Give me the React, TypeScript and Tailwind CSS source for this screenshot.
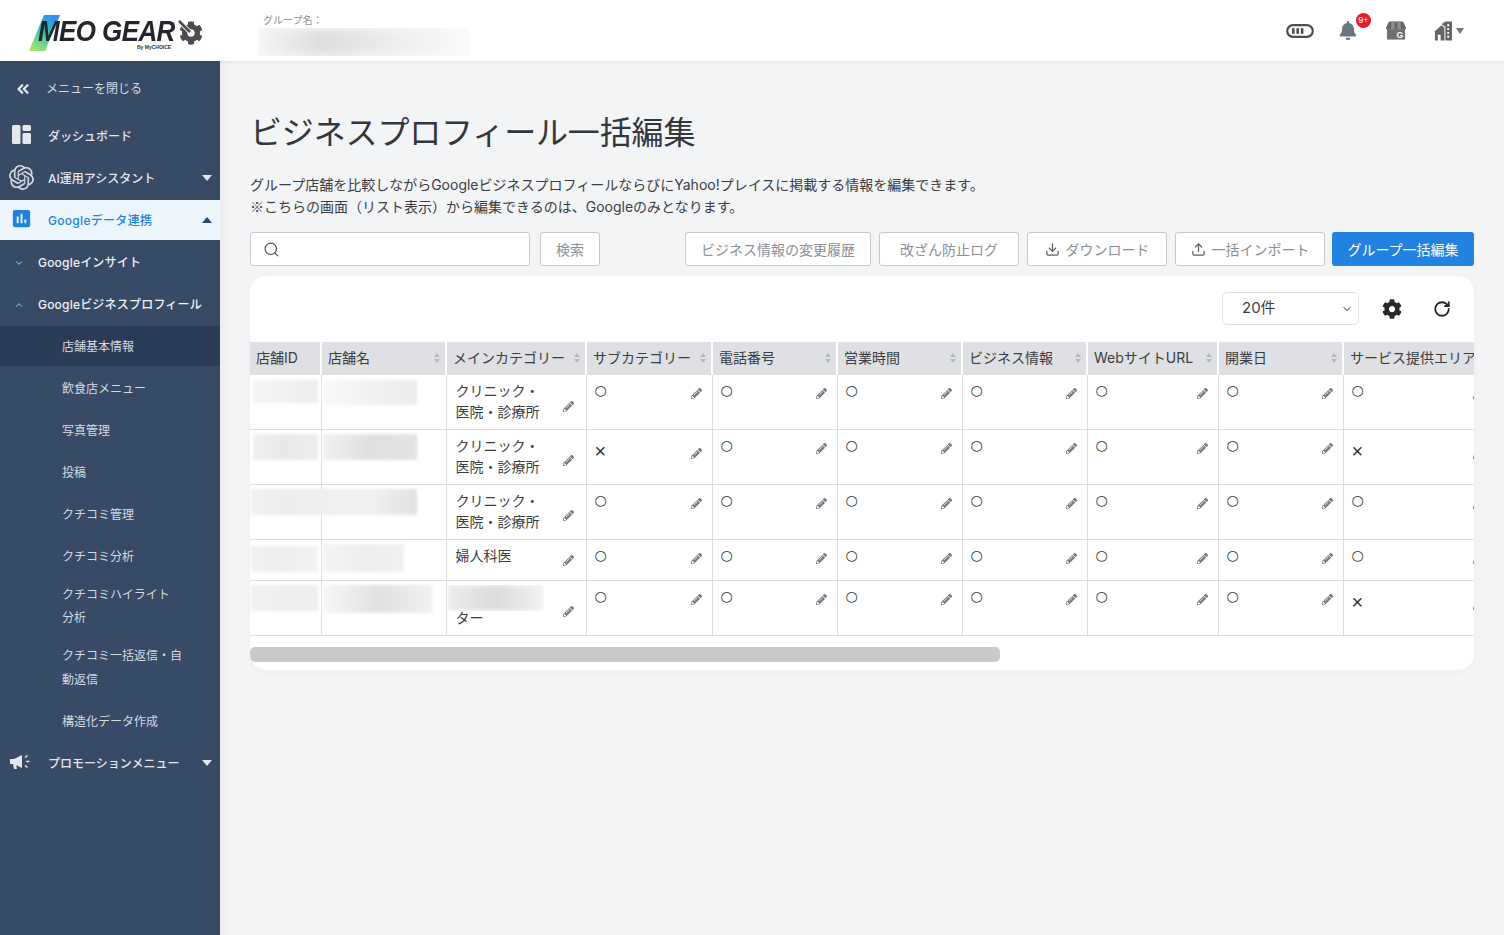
import React from "react";
import { ChevronsLeft, ChevronDown, ChevronUp, Search, Download, Upload, RotateCw } from "lucide-react";
import { FaBell, FaCog, FaPencilAlt } from "react-icons/fa";
import { MdInsertChart } from "react-icons/md";
import { SiOpenai } from "react-icons/si";

const Caret = ({ up, w = 10 }: { up?: boolean; w?: number }) => (
  <svg width={w} height="6" viewBox="0 0 10 6" preserveAspectRatio="none" className="shrink-0">
    <path d={up ? "M0 6 L5 0 L10 6 Z" : "M0 0 L10 0 L5 6 Z"} fill="currentColor" />
  </svg>
);

const Sort = () => (
  <svg width="6" height="10" viewBox="0 0 6 10" className="shrink-0">
    <path d="M3 0 L6 4 L0 4 Z M3 10 L0 6 L6 6 Z" fill="#b5b8bd" />
  </svg>
);

const Pencil = ({ main }: { main?: boolean }) => (
  <FaPencilAlt size={11} className={"shrink-0 text-[#767c85] " + (main ? "mt-[10px]" : "mt-[6px]")} />
);

function Logo() {
  return (
    <div className="relative w-[220px] h-[60px] shrink-0">
      <svg width="32" height="37" viewBox="0 0 32 37" className="absolute left-[29px] top-[14px]">
        <defs>
          <linearGradient id="lg" x1="0.7" y1="0" x2="0.2" y2="1">
            <stop offset="0" stopColor="#2f8ff0" />
            <stop offset="0.45" stopColor="#38c0b0" />
            <stop offset="1" stopColor="#a5e66a" />
          </linearGradient>
        </defs>
        <path d="M15 0 H31 L16 36 H0 Z" fill="url(#lg)" />
      </svg>
      <span className="absolute left-[38px] top-[19px] text-[26px] leading-[22px] italic font-bold tracking-[-0.6px] text-[#23262b] whitespace-nowrap origin-left scale-y-110 [font-family:'Liberation_Sans',sans-serif]">
        MEO GEAR
      </span>
      <span className="absolute left-[137px] top-[43px] text-[5px] leading-[6px] font-bold text-[#333] whitespace-nowrap [font-family:'Liberation_Sans',sans-serif]">
        By MyCHOICE
      </span>
      <FaCog size={24} className="absolute left-[179px] top-[20px] text-[#4a4d52]" />
      <svg width="18" height="18" viewBox="0 0 18 18" className="absolute left-[176px] top-[17px]">
        <path d="M3 3 L14 14" stroke="#fff" strokeWidth="4.5" />
        <path d="M3 3 L14 14" stroke="#4a4d52" strokeWidth="2.6" />
      </svg>
    </div>
  );
}

function Header() {
  return (
    <header className="relative z-20 h-[61px] shrink-0 bg-white flex items-center shadow-[0_1px_4px_rgba(0,0,0,0.08)]">
      <Logo />
      <div className="ml-[38px] w-[211px] pt-[14px] self-start">
        <div className="pl-[5px] text-[10px] leading-[13px] text-[#8d9096]">グループ名：</div>
        <div className="mt-[1px] h-[28px] overflow-hidden bg-[#fbfbfb]">
          <div className="h-full blur-[4px] bg-linear-to-r from-[#f4f4f4] via-[#dfdfdf] via-30% to-[#fbfbfb]" />
        </div>
      </div>
      <div className="ml-auto flex items-center pr-[40px]">
        <svg width="28" height="14" viewBox="0 0 28 14" className="mr-[25px]">
          <rect x="1.2" y="1.2" width="25.6" height="11.6" rx="5.8" fill="none" stroke="#4a4d52" strokeWidth="2.2" />
          <rect x="6" y="4.2" width="2.6" height="5.6" fill="#4a4d52" />
          <rect x="10.4" y="4.2" width="2.6" height="5.6" fill="#4a4d52" />
          <rect x="14.8" y="4.2" width="2.6" height="5.6" fill="#4a4d52" />
        </svg>
        <div className="relative mr-[29px] w-[18px] h-[20px] flex items-center justify-center">
          <FaBell size={19} className="text-[#6b7480]" />
          <span className="absolute left-[17px] top-[-8px] w-[15px] h-[15px] rounded-full bg-[#e8192c] text-white text-[9px] leading-[15px] text-center [font-family:'Liberation_Sans',sans-serif]">
            9+
          </span>
        </div>
        <svg width="20" height="19" viewBox="0 0 21 19" className="mr-[28px]">
          <path d="M3 0 H18 L21 7 V8 H0 V7 Z" fill="#666" />
          <path d="M6 0 H9 V8 H5 Z M12 0 H15 L16 8 H12 Z" fill="#8e8e8e" />
          <path d="M1 8 H20 V19 H1 Z" fill="#6f6f6f" />
          <text x="11" y="17.5" fontSize="9" fontWeight="700" fill="#fff" fontFamily="Liberation Sans">G</text>
        </svg>
        <svg width="18" height="20" viewBox="0 0 19 20">
          <path d="M0 11 L8 4 L11 6.5 V20 H7 V14 H4 V20 H1 V11 Z" fill="#666" />
          <path d="M8 3 L12 0 H19 V20 H12 V5.5 Z" fill="#666" />
          <path d="M14 3 h2 v2 h-2 z M14 7 h2 v2 h-2 z M14 11 h2 v2 h-2 z M14 15 h2 v2 h-2 z" fill="#fff" />
        </svg>
        <span className="ml-[4px] text-[#777]"><Caret w={8} /></span>
      </div>
    </header>
  );
}

function TopItem({ icon, label, caret, active }: { icon: React.ReactNode; label: string; caret?: "up" | "down"; active?: boolean }) {
  return (
    <div className={"flex items-center pr-[8px] text-[12px] font-medium " + (active ? "h-[40px] pt-[1px] mb-[2px] bg-[#edf5fc] text-[#1e82e0] tracking-[0.3px]" : "h-[42px] text-[#e4e8ee]")}>
      <div className="w-[42px] flex justify-center shrink-0">{icon}</div>
      <span className="ml-[6px]">{label}</span>
      {caret && <span className={"ml-auto -mt-[2px] " + (active ? "text-[#2b4a6f]" : "text-[#e4e8ee]")}><Caret up={caret === "up"} /></span>}
    </div>
  );
}

function GroupItem({ label, open }: { label: string; open?: boolean }) {
  return (
    <div className="h-[42px] flex items-center text-[12px] font-medium tracking-[0.2px] text-[#f0f2f5]">
      <div className="w-[38px] pl-[14px] shrink-0 text-[#aab2bf]">
        {open ? <ChevronUp size={10} strokeWidth={2.5} /> : <ChevronDown size={10} strokeWidth={2.5} />}
      </div>
      <span>{label}</span>
    </div>
  );
}

function SubItem({ label, cls = "h-[42px]" }: { label: React.ReactNode; cls?: string }) {
  return (
    <div className={"flex items-center pl-[62px] text-[12px] leading-[23.5px] whitespace-nowrap text-[#d5dae2] " + cls}>
      <span>{label}</span>
    </div>
  );
}

function Sidebar() {
  return (
    <aside className="w-[220px] shrink-0 bg-[#374a66] flex flex-col">
      <div className="h-[55px] flex items-center text-[12px] text-[#d5dae2]">
        <div className="w-[46px] pl-[14px] shrink-0 text-[#e4e8ee]"><ChevronsLeft size={18} strokeWidth={3} /></div>
        <span>メニューを閉じる</span>
      </div>
      <TopItem
        label="ダッシュボード"
        icon={
          <svg width="19" height="19" viewBox="0 0 19 19" className="-mt-[6px]">
            <rect x="0" y="0" width="8.5" height="19" rx="1.5" fill="#e4e8ee" />
            <rect x="10.5" y="0" width="8.5" height="6" rx="1.5" fill="#e4e8ee" />
            <rect x="10.5" y="8" width="8.5" height="11" rx="1.5" fill="#e4e8ee" />
          </svg>
        }
      />
      <TopItem label="AI運用アシスタント" caret="down" icon={<SiOpenai size={25} className="text-[#d5dae2] -mt-[3px]" />} />
      <TopItem label="Googleデータ連携" caret="up" active icon={<MdInsertChart size={23} className="text-[#1e82e0] -mt-[5px]" />} />
      <GroupItem label="Googleインサイト" />
      <GroupItem label="Googleビジネスプロフィール" open />
      <SubItem label="店舗基本情報" cls="h-[40px] pt-[1px] mb-[2px] bg-[#2b3a55]" />
      <SubItem label="飲食店メニュー" />
      <SubItem label="写真管理" />
      <SubItem label="投稿" />
      <SubItem label="クチコミ管理" />
      <SubItem label="クチコミ分析" />
      <SubItem label={<>クチコミハイライト<br />分析</>} cls="h-[56px]" />
      <SubItem label={<>クチコミ一括返信・自<br />動返信</>} cls="h-[67px]" />
      <SubItem label="構造化データ作成" />
      <TopItem
        label="プロモーションメニュー"
        caret="down"
        icon={
          <svg width="22" height="16" viewBox="0 0 22 16" className="-mt-[4px]">
            <path d="M0 5 H4 L12 1 V14 L4 10 H0 Z M3 10 H6 L7 15 H4 Z" fill="#e4e8ee" />
            <path d="M15 3.5 L17.5 1.5 M16 7.5 H19.5 M15 11.5 L17.5 13.5" stroke="#e4e8ee" strokeWidth="1.6" />
          </svg>
        }
      />
    </aside>
  );
}

const Btn = ({ children, cls }: { children: React.ReactNode; cls: string }) => (
  <div className={"h-[34px] flex items-center justify-center gap-[6px] border border-[#c6c8cd] rounded-[3px] bg-white text-[14px] text-[#8b8f96] whitespace-nowrap " + cls}>
    {children}
  </div>
);

const columns = [
  { w: "w-[71px]", label: "店舗ID", sort: false },
  { w: "w-[125px]", label: "店舗名", sort: true },
  { w: "w-[140px]", label: "メインカテゴリー", sort: true },
  { w: "w-[126px]", label: "サブカテゴリー", sort: true },
  { w: "w-[125px]", label: "電話番号", sort: true },
  { w: "w-[125px]", label: "営業時間", sort: true },
  { w: "w-[125px]", label: "ビジネス情報", sort: true },
  { w: "w-[131px]", label: "WebサイトURL", sort: true },
  { w: "w-[125px]", label: "開業日", sort: true },
  { w: "w-[151px]", label: "サービス提供エリア", sort: false },
];

type Row = {
  h: string;
  id: string;
  name: string;
  main: React.ReactNode;
  flags: string[];
};

const two = (
  <>
    クリニック・
    <br />
    医院・診療所
  </>
);

const rows: Row[] = [
  {
    h: "h-[54px]",
    id: "ml-[3px] mt-[5px] w-[65px] h-[23px] bg-linear-to-r from-[#f5f5f5] via-[#f1f1f1] to-[#ececec]",
    name: "ml-[1px] mt-[5px] w-[94px] h-[25px] bg-linear-to-r from-[#fafafa] via-[#f1f1f1] to-[#ebebeb]",
    main: two,
    flags: ["○", "○", "○", "○", "○", "○", "○"],
  },
  {
    h: "h-[55px]",
    id: "ml-[3px] mt-[4px] w-[65px] h-[26px] bg-linear-to-r from-[#efefef] via-[#e8e8e8] to-[#ececec]",
    name: "ml-[1px] mt-[4px] w-[94px] h-[26px] bg-linear-to-r from-[#f0f0f0] via-[#e0e0e0] to-[#e3e3e3]",
    main: two,
    flags: ["×", "○", "○", "○", "○", "○", "×"],
  },
  {
    h: "h-[55px]",
    id: "relative z-10 ml-[1px] mt-[4px] w-[72px] h-[26px] bg-linear-to-r from-[#f0f0f0] via-[#ececec] to-[#eeeeee]",
    name: "mt-[4px] w-[95px] h-[26px] bg-linear-to-r from-[#eeeeee] via-[#f0f0f0] to-[#e2e2e2]",
    main: two,
    flags: ["○", "○", "○", "○", "○", "○", "○"],
  },
  {
    h: "h-[41px]",
    id: "ml-[1px] mt-[6px] w-[67px] h-[26px] bg-linear-to-r from-[#f0f0f0] via-[#ededed] to-[#f2f2f2]",
    name: "ml-[1px] mt-[4px] w-[81px] h-[28px] bg-linear-to-r from-[#f4f4f4] via-[#ededed] to-[#efefef]",
    main: "婦人科医",
    flags: ["○", "○", "○", "○", "○", "○", "○"],
  },
  {
    h: "h-[55px]",
    id: "ml-[1px] mt-[4px] w-[67px] h-[26px] bg-linear-to-r from-[#f0f0f0] via-[#eeeeee] to-[#eeeeee]",
    name: "ml-[1px] mt-[4px] w-[109px] h-[28px] bg-linear-to-r from-[#f6f6f6] via-[#e2e2e2] to-[#f0f0f0]",
    main: (
      <>
        <div className="-ml-[8px] -mt-[1px] -mb-[4px] w-[96px] h-[26px] overflow-hidden">
          <div className="h-full blur-[2px] bg-linear-to-r from-[#ececec] via-[#dcdcdc] to-[#f2f2f2]" />
        </div>
        ター
      </>
    ),
    flags: ["○", "○", "○", "○", "○", "○", "×"],
  },
];

const Blur = ({ cls }: { cls: string }) => <div className={"blur-[1.5px] " + cls} />;

const Flag = ({ v }: { v: string }) => (
  <div className="pl-[8px] pr-[10px] pt-[5px] flex items-center justify-between">
    {v === "×" ? (
      <span className="leading-[32px] text-[20px] text-[#333] [font-family:'Liberation_Sans',sans-serif]">×</span>
    ) : (
      <span className="leading-[21px] text-[14px] text-[#333] [font-family:'DejaVu_Sans',sans-serif]">○</span>
    )}
    <Pencil />
  </div>
);

function DataTable() {
  return (
    <div className="overflow-hidden">
      <table className="table-fixed border-collapse w-[1244px] text-[14px] text-[#3a3d42]">
        <colgroup>
          {columns.map((c) => (
            <col key={c.label} className={c.w} />
          ))}
        </colgroup>
        <thead>
          <tr className="h-[33px] bg-[#dfe0e3]">
            {columns.map((c) => (
              <th key={c.label} className="p-0 font-normal text-left border-r-2 border-r-white last:border-r-0">
                <div className="flex items-center justify-between pl-[6px] pr-[5px] -mt-[2px] whitespace-nowrap">
                  <span>{c.label}</span>
                  {c.sort && <Sort />}
                </div>
              </th>
            ))}
          </tr>
        </thead>
        <tbody>
          {rows.map((r, i) => (
            <tr key={i} className={r.h + " border-b border-b-[#dcdde0]"}>
              <td className="p-0 align-top border-r border-r-[#dcdde0]"><Blur cls={r.id} /></td>
              <td className="p-0 align-top border-r border-r-[#dcdde0]"><Blur cls={r.name} /></td>
              <td className="p-0 align-top border-r border-r-[#dcdde0]">
                <div className="pl-[9px] pr-[12px] pt-[5px] flex items-center justify-between leading-[21px]">
                  <div>{r.main}</div>
                  <Pencil main />
                </div>
              </td>
              {r.flags.map((v, j) => (
                <td key={j} className={"p-0 align-top " + (j < 6 ? "border-r border-r-[#dcdde0]" : "")}>
                  <Flag v={v} />
                </td>
              ))}
            </tr>
          ))}
        </tbody>
      </table>
    </div>
  );
}

export default function App() {
  return (
    <div className="h-screen flex flex-col overflow-hidden bg-[#f3f4f6] text-[#3a3d42] [font-family:Inter,'Noto_Sans_CJK_JP',sans-serif]">
      <Header />
      <div className="flex flex-1 min-h-0">
        <Sidebar />
        <main className="flex-1 min-w-0 px-[30px] pt-[48px] shadow-[inset_14px_0_14px_-14px_rgba(0,0,0,0.07)]">
          <h1 className="text-[32px] leading-[48px] font-normal tracking-[-0.15px] text-[#33363b]">ビジネスプロフィール一括編集</h1>
          <p className="mt-[17px] h-[44px] text-[14px] leading-[22px] text-[#3a3d42]">
            グループ店舗を比較しながらGoogleビジネスプロフィールならびにYahoo!プレイスに掲載する情報を編集できます。
            <br />
            <span className="leading-none [font-family:'Noto_Sans_CJK_JP',sans-serif]">※</span>こちらの画面（リスト表示）から編集できるのは、Googleのみとなります。
          </p>
          <div className="mt-[14px] flex items-center">
            <div className="w-[280px] h-[34px] flex items-center pl-[12px] border border-[#c6c8cd] rounded-[3px] bg-white">
              <Search size={17} strokeWidth={1.6} className="text-[#4a4d52]" />
            </div>
            <Btn cls="ml-[10px] w-[60px]">検索</Btn>
            <div className="ml-auto flex items-center gap-[8px]">
              <Btn cls="w-[186px]">ビジネス情報の変更履歴</Btn>
              <Btn cls="w-[140px]">改ざん防止ログ</Btn>
              <Btn cls="w-[140px]">
                <Download size={15} strokeWidth={2} className="text-[#5a5e65]" />
                ダウンロード
              </Btn>
              <Btn cls="w-[150px]">
                <Upload size={15} strokeWidth={2} className="text-[#5a5e65]" />
                一括インポート
              </Btn>
              <div className="ml-[-1px] w-[142px] h-[34px] flex items-center justify-center rounded-[3px] bg-[#2183df] text-[14px] text-white whitespace-nowrap">
                グループ一括編集
              </div>
            </div>
          </div>
          <section className="mt-[10px] h-[394px] rounded-[16px] bg-white overflow-hidden shadow-[0_2px_8px_rgba(0,0,0,0.03)]">
            <div className="h-[66px] pt-[16px] pr-[23px] flex items-start justify-end">
              <div className="w-[137px] h-[33px] pl-[19px] pr-[5px] flex items-center justify-between border border-[#dfe0e3] rounded-[5px] text-[15px] text-[#3a3d42]">
                20件
                <ChevronDown size={12} strokeWidth={2} className="text-[#222]" />
              </div>
              <div className="ml-[23px] h-[33px] flex items-center">
                <FaCog size={20} className="text-[#26282c]" />
              </div>
              <div className="ml-[31px] h-[33px] flex items-center">
                <RotateCw size={18} strokeWidth={2.4} className="text-[#26282c]" />
              </div>
            </div>
            <DataTable />
            <div className="mt-[11px] h-[15px] w-[750px] rounded-[5px] bg-[#c9c9c9]" />
          </section>
        </main>
      </div>
    </div>
  );
}
